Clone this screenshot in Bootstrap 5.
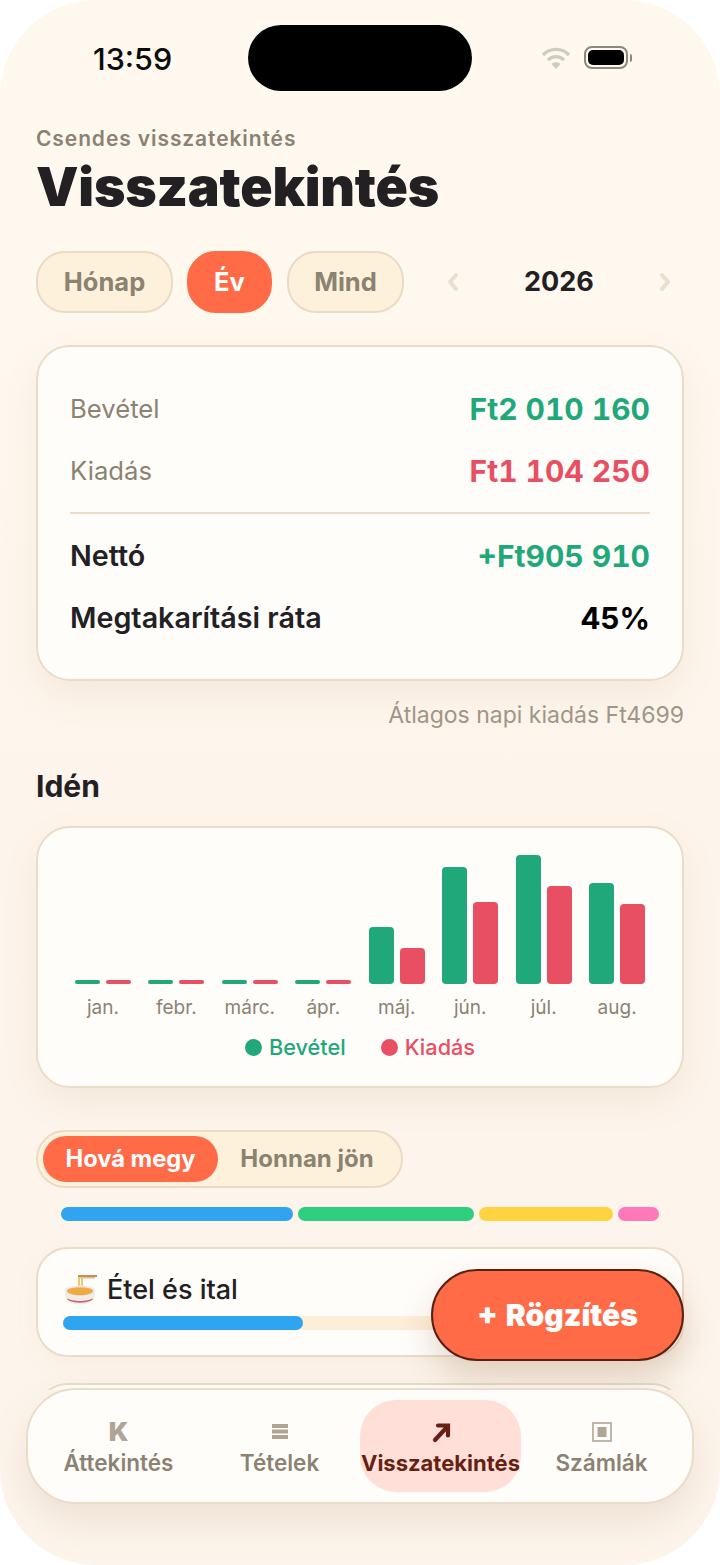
<!DOCTYPE html>
<html lang="hu">
<head>
  <meta charset="UTF-8">
  <meta name="viewport" content="width=device-width, initial-scale=1.0">
  <title>Visszatekintés</title>
  <link href="https://cdn.jsdelivr.net/npm/bootstrap@5.3.0/dist/css/bootstrap.min.css" rel="stylesheet">
  <style>
    html, body { margin: 0; background: #fff; }
    body { width: 720px; height: 1565px; overflow: hidden; font-family: Inter, "Noto Sans", sans-serif; color: #232023; }
    .phone { position: relative; width: 720px; height: 1565px; overflow: hidden; border-radius: 96px; background: linear-gradient(#fff8ef 0, #fff8ef 300px, #fdf4eb 900px, #fdf5ec 100%); }
    .island { position: absolute; left: 248px; top: 25px; width: 224px; height: 66px; border-radius: 33px; background: #000; }
    .statusbar { height: 114px; padding: 41px 88px 0 93px; }
    .clock { font-size: 30.5px; line-height: 36px; font-weight: 500; color: #0c0c0c; }
    .batt { width: 44px; height: 23px; border: 2px solid #8d887e; border-radius: 8px; padding: 2px; }
    .batt-fill { display: block; width: 100%; height: 100%; background: #000; border-radius: 5px; }
    .batt-tip { width: 2px; height: 8px; background: #8d887e; border-radius: 0 2px 2px 0; margin-left: 2px; }
    .status-icons { padding-top: 5px; gap: 13px; }
    .screen { height: 1276px; overflow: hidden; padding: 0 36px; }
    .eyebrow { font-size: 21px; line-height: 26px; font-weight: 600; letter-spacing: .9px; color: #8c8272; margin-top: 12px; }
    .page-title { font-size: 53.5px; line-height: 60px; font-weight: 900; margin: 5px 0 34px; letter-spacing: -.2px; }
    .pill { height: 62px; border-radius: 29px; border: 2px solid #eadcc3; background: #fdf1dc; color: #8c8272; font-size: 25.5px; font-weight: 700; display: flex; align-items: center; justify-content: center; }
    .pill-active { background: #ff6b47; border-color: #ff6b47; color: #fff; }
    .w-honap { width: 137px; margin-right: 14px; }
    .w-ev { width: 85px; margin-right: 15px; }
    .w-mind { width: 117px; }
    .yearnav { flex: 1; padding-left: 42px; padding-right: 12px; }
    .yearval { font-size: 27px; font-weight: 700; color: #232023; }
    .panel { background: #fffdfa; border: 2px solid #eadcc8; border-radius: 34px; box-shadow: 0 14px 36px rgba(160, 110, 60, .09); }
    .summary { height: 336px; margin-top: 32px; padding: 31px 32px 0; }
    .sumrow { height: 62px; }
    .sumlabel { font-size: 25.7px; color: #8c8272; }
    .sumvalue { font-size: 30px; font-weight: 700; font-variant-numeric: tabular-nums; }
    .sumstrong { font-size: 28.7px; font-weight: 600; color: #232023; }
    .green { color: #20a87a; }
    .red { color: #e94f62; }
    .sumrule { height: 2px; background: #eadcc8; margin: 10px 0 11px; }
    .avgline { text-align: right; font-size: 23px; line-height: 28px; color: #a09686; margin-top: 20px; }
    .section-title { font-size: 30px; line-height: 36px; font-weight: 700; margin: 39px 0 22px; }
    .chart { height: 262px; padding: 0 37px; }
    .bars { height: 156px; gap: 17.6px; }
    .month { width: 56px; gap: 6px; }
    .bar { flex: 1; border-radius: 4px; }
    .bar-in { background: #20a87a; }
    .bar-out { background: #e94f62; }
    .monthnames { gap: 17.6px; margin-top: 11px; }
    .monthname { width: 56px; text-align: center; font-size: 19px; line-height: 26px; color: #8c8272; white-space: nowrap; }
    .legend { gap: 35px; margin-top: 12px; font-size: 21.7px; line-height: 28px; font-weight: 500; }
    .dot { width: 17px; height: 17px; border-radius: 50%; margin-right: 7px; }
    .seg { width: 367px; height: 58px; margin-top: 42px; padding: 5px; border-radius: 29px; border: 2px solid #eadcc3; background: #fdf1dc; font-weight: 700; color: #8c8272; }
    .seg-on { width: 175px; height: 46px; border-radius: 23px; background: #ff6b47; color: #fff; font-size: 23.7px; }
    .seg-off { flex: 1; font-size: 24px; }
    .stack { margin: 19px 25px 0; gap: 5px; height: 14px; }
    .stack-part { border-radius: 7px; }
    .catcard { height: 110px; margin-top: 26px; padding: 23px 25px 0; border-radius: 32px; box-shadow: 0 8px 24px rgba(160, 110, 60, .05); }
    .catname { font-size: 27px; line-height: 36px; font-weight: 500; gap: 10px; padding-left: 1px; }
    .track { height: 14px; border-radius: 7px; background: #fdeed8; margin-top: 8px; }
    .track-fill { height: 100%; border-radius: 7px; background: #2fa5f2; }
    .fab { position: absolute; left: 431px; top: 1269px; width: 253px; height: 92px; border-radius: 46px; background: #ff6b47; border: 2px solid #5a2012; color: #fff; font-size: 30px; font-weight: 900; word-spacing: 2px; box-shadow: 0 16px 34px rgba(120, 70, 30, .2); }
    .bottomnav { position: absolute; left: 26px; top: 1388px; width: 668px; height: 116px; padding: 10px 10px 0; border-radius: 50px; background: #fffdfa; border: 2px solid #eadcc8; box-shadow: 0 18px 40px rgba(140, 90, 50, .13); }
    .navitem { width: 161px; height: 92px; border-radius: 36px; font-size: 22.5px; line-height: 26px; font-weight: 600; color: #8c8272; padding-top: 20px; }
    .navitem-active { background: #ffdfd7; color: #671f14; font-size: 22px; font-weight: 700; }
    .navicon { height: 24px; margin-bottom: 6px; }
    .navk { font-size: 26px; line-height: 24px; font-weight: 900; color: #b0a595; }
  </style>
</head>
<body>
  <div class="phone">
    <div class="island"></div>
    <div class="statusbar d-flex justify-content-between">
      <div class="clock">13:59</div>
      <div class="status-icons d-flex align-items-start">
        <svg width="30" height="24" viewBox="0 0 30 24" fill="none" stroke="#d2cabd" stroke-width="3.4">
          <path d="M2 9 C9 1.5 21 1.5 28 9"/>
          <path d="M7 14 C11.5 9.5 18.5 9.5 23 14"/>
          <path d="M15 23 L10.5 18 C13 15.6 17 15.6 19.5 18 Z" fill="#d2cabd" stroke="none"/>
        </svg>
        <div class="d-flex align-items-center">
          <div class="batt"><span class="batt-fill"></span></div>
          <div class="batt-tip"></div>
        </div>
      </div>
    </div>

    <main class="screen">
      <div class="eyebrow">Csendes visszatekintés</div>
      <h1 class="page-title">Visszatekintés</h1>

      <div class="d-flex align-items-center">
        <div class="pill w-honap">Hónap</div>
        <div class="pill pill-active w-ev">Év</div>
        <div class="pill w-mind">Mind</div>
        <div class="yearnav d-flex align-items-center justify-content-between">
          <svg width="14" height="20" viewBox="0 0 14 20" fill="none" stroke="#e9dfcd" stroke-width="4" stroke-linecap="round" stroke-linejoin="round"><path d="M10 3 L4 10 L10 17"/></svg>
          <span class="yearval">2026</span>
          <svg width="14" height="20" viewBox="0 0 14 20" fill="none" stroke="#e9dfcd" stroke-width="4" stroke-linecap="round" stroke-linejoin="round"><path d="M4 3 L10 10 L4 17"/></svg>
        </div>
      </div>

      <section class="panel summary">
        <div class="sumrow d-flex justify-content-between align-items-center"><span class="sumlabel">Bevétel</span><span class="sumvalue green">Ft2 010 160</span></div>
        <div class="sumrow d-flex justify-content-between align-items-center"><span class="sumlabel">Kiadás</span><span class="sumvalue red">Ft1 104 250</span></div>
        <div class="sumrule"></div>
        <div class="sumrow d-flex justify-content-between align-items-center"><span class="sumstrong">Nettó</span><span class="sumvalue green">+Ft905 910</span></div>
        <div class="sumrow d-flex justify-content-between align-items-center"><span class="sumstrong">Megtakarítási ráta</span><span class="sumvalue text-black">45%</span></div>
      </section>
      <div class="avgline">Átlagos napi kiadás Ft4699</div>

      <h2 class="section-title">Idén</h2>
      <section class="panel chart">
        <div class="bars d-flex">
          <div class="month d-flex align-items-end"><div class="bar bar-in" style="height:4px"></div><div class="bar bar-out" style="height:4px"></div></div>
          <div class="month d-flex align-items-end"><div class="bar bar-in" style="height:4px"></div><div class="bar bar-out" style="height:4px"></div></div>
          <div class="month d-flex align-items-end"><div class="bar bar-in" style="height:4px"></div><div class="bar bar-out" style="height:4px"></div></div>
          <div class="month d-flex align-items-end"><div class="bar bar-in" style="height:4px"></div><div class="bar bar-out" style="height:4px"></div></div>
          <div class="month d-flex align-items-end"><div class="bar bar-in" style="height:57px"></div><div class="bar bar-out" style="height:36px"></div></div>
          <div class="month d-flex align-items-end"><div class="bar bar-in" style="height:117px"></div><div class="bar bar-out" style="height:82px"></div></div>
          <div class="month d-flex align-items-end"><div class="bar bar-in" style="height:129px"></div><div class="bar bar-out" style="height:98px"></div></div>
          <div class="month d-flex align-items-end"><div class="bar bar-in" style="height:101px"></div><div class="bar bar-out" style="height:80px"></div></div>
        </div>
        <div class="monthnames d-flex">
          <div class="monthname">jan.</div><div class="monthname">febr.</div><div class="monthname">márc.</div><div class="monthname">ápr.</div>
          <div class="monthname">máj.</div><div class="monthname">jún.</div><div class="monthname">júl.</div><div class="monthname">aug.</div>
        </div>
        <div class="legend d-flex justify-content-center">
          <div class="d-flex align-items-center green"><span class="dot bar-in"></span>Bevétel</div>
          <div class="d-flex align-items-center red"><span class="dot bar-out"></span>Kiadás</div>
        </div>
      </section>

      <div class="seg d-flex align-items-center">
        <div class="seg-on d-flex align-items-center justify-content-center">Hová megy</div>
        <div class="seg-off d-flex align-items-center justify-content-center">Honnan jön</div>
      </div>

      <div class="stack d-flex">
        <div class="stack-part" style="width:232px;background:#2fa5f2"></div>
        <div class="stack-part" style="width:176px;background:#2ed080"></div>
        <div class="stack-part" style="width:134px;background:#ffd23f"></div>
        <div class="stack-part" style="width:41px;background:#ff78b9"></div>
      </div>

      <section class="panel catcard">
        <div class="catname d-flex align-items-center">
          <svg width="33" height="30" viewBox="0 0 33 30">
            <rect x="14" y="0" width="19" height="2" fill="#c58d57"/>
            <rect x="14" y="2" width="17" height="1.6" fill="#e2c29a"/>
            <path d="M15 3 V15 M18 3 V15" stroke="#e9c35c" stroke-width="1.8" fill="none"/>
            <ellipse cx="16" cy="16" rx="15.5" ry="5.5" fill="#ecebe8"/>
            <ellipse cx="16" cy="16.2" rx="13" ry="4" fill="#f2aa42"/>
            <path d="M.5 17 C1 25 7 29.5 16 29.5 C25 29.5 31 25 31.5 17 C26 22.5 6 22.5 .5 17 Z" fill="#efedea"/>
            <path d="M2.5 23 C8 27 24 27 29.5 23 L28 25.3 C22 28.6 10 28.6 4 25.3 Z" fill="#c8626c"/>
          </svg>
          <span>Étel és ital</span>
        </div>
        <div class="track"><div class="track-fill" style="width:40.4%"></div></div>
      </section>
      <section class="panel catcard"></section>
    </main>

    <button type="button" class="fab btn d-flex align-items-center justify-content-center">+ Rögzítés</button>

    <nav class="bottomnav d-flex">
      <div class="navitem d-flex flex-column align-items-center">
        <div class="navicon navk">K</div>
        <div>Áttekintés</div>
      </div>
      <div class="navitem d-flex flex-column align-items-center">
        <svg class="navicon" width="16" height="24" viewBox="0 0 16 24" fill="#b0a595"><rect y="4" width="16" height="4"/><rect y="9.5" width="16" height="4"/><rect y="15" width="16" height="4"/></svg>
        <div>Tételek</div>
      </div>
      <div class="navitem navitem-active d-flex flex-column align-items-center">
        <svg class="navicon" width="20" height="24" viewBox="0 0 20 24" fill="none" stroke="#671f14" stroke-width="4.2" stroke-linecap="round" stroke-linejoin="miter"><path d="M4 20 L16 7"/><path d="M7 5.5 H17 V15.5"/></svg>
        <div>Visszatekintés</div>
      </div>
      <div class="navitem d-flex flex-column align-items-center">
        <svg class="navicon" width="20" height="24" viewBox="0 0 20 24"><rect x="1" y="3" width="18" height="18" fill="none" stroke="#b0a595" stroke-width="1.6"/><rect x="5.5" y="7" width="9" height="10" fill="#b0a595"/></svg>
        <div>Számlák</div>
      </div>
    </nav>
  </div>

  <script src="https://cdn.jsdelivr.net/npm/bootstrap@5.3.0/dist/js/bootstrap.bundle.min.js"></script>
</body>
</html>
